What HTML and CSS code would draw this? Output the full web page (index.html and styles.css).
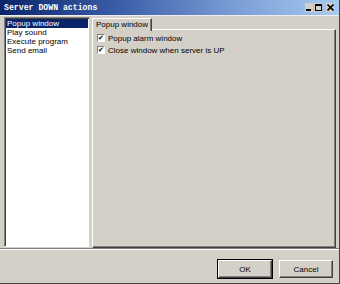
FILE: index.html
```html
<!DOCTYPE html>
<html>
<head>
<meta charset="utf-8">
<link rel="stylesheet" href="styles.css">
</head>
<body>
<div class="window">
  <div class="titlebar">
    <span class="title">Server DOWN actions</span>
    <div class="tbtns">
      <span class="tb tb-min"><svg width="6" height="7" viewBox="0 0 6 7"><rect x="0" y="5" width="5" height="2" fill="#000"/></svg></span>
      <span class="tb tb-max"><svg width="7" height="7" viewBox="0 0 7 7"><rect x="0.5" y="0.5" width="6" height="6" fill="none" stroke="#000"/><rect x="0" y="0" width="7" height="2" fill="#000"/></svg></span>
      <span class="tb tb-close"><svg width="7" height="7" viewBox="0 0 7 7"><path d="M0.5 0.5L6.5 6.5M6.5 0.5L0.5 6.5" stroke="#000" stroke-width="1.6"/></svg></span>
    </div>
  </div>
  <div class="main">
    <ul class="list">
      <li class="sel">Popup window</li>
      <li>Play sound</li>
      <li>Execute program</li>
      <li>Send email</li>
    </ul>
    <div class="tabs">
      <div class="tabrow"><span class="tab">Popup window</span></div>
      <div class="panel">
        <label class="chk"><span class="box">✔</span>Popup alarm window</label>
        <label class="chk"><span class="box">✔</span>Close window when server is UP</label>
      </div>
    </div>
  </div>
  <div class="footer">
    <button class="btn">OK</button>
    <button class="btn">Cancel</button>
  </div>
</div>
</body>
</html>
```
FILE: styles.css
```css
* { box-sizing: border-box; }
html, body { margin: 0; padding: 0; }
body {
  width: 340px; height: 284px; overflow: hidden;
  font-family: "Liberation Sans", Arial, sans-serif;
  font-size: 8px;
  background: #d4d0c8;
}
.window {
  width: 340px; height: 284px;
  display: flex; flex-direction: column;
  background: #d4d0c8;
  border-right: 1px solid #404040;
  border-bottom: 1px solid #404040;
}
.titlebar {
  height: 16px;
  display: flex; align-items: center; justify-content: space-between;
  padding: 0 5px 0 4px;
  background: linear-gradient(to right, #0a246a 0%, #3a5ea8 35%, #7b9fd6 70%, #a6caf0 100%);
  border-bottom: 1px solid #eee;
}
.title {
  color: #fff; font-family: "Liberation Mono", monospace; font-weight: bold; font-size: 8.2px;
}
.tbtns { display: flex; gap: 1px; align-items: center; }
.tb {
  width: 8px; height: 9px; display: flex; align-items: center; justify-content: center;
  background: #d4d0c8;
}
.tb-close { margin-left: 3px; }
.main {
  flex: 1;
  display: flex; gap: 2px;
  padding: 1px 3px 0 4px;
  min-height: 0;
}
.list {
  margin: 0; padding: 1px; list-style: none;
  width: 86px;
  background: #fff;
  border-top: 1px solid #808080; border-left: 1px solid #808080;
  border-right: 1px solid #d4d0c8; border-bottom: 1px solid #fff;
  box-shadow: inset 1px 1px 0 #404040;
  height: 230px;
}
.list li { height: 9px; line-height: 9px; padding-left: 1px; color: #000; white-space: nowrap; }
.list li.sel { background: #0a246a; color: #fff; }
.tabs { flex: 1; display: flex; flex-direction: column; height: 231px; }
.tabrow { height: 12px; display: flex; padding-left: 0; }
.tab {
  height: 13px; line-height: 11px; padding: 0 3px;
  border-top: 1px solid #fff; border-left: 1px solid #fff;
  border-right: 1px solid #404040;
  box-shadow: inset -1px 0 0 #808080;
  background: #d4d0c8; position: relative; z-index: 1; margin-top: 1px;
}
.panel {
  flex: 1;
  border-top: 1px solid #fff; border-left: 1px solid #fff;
  border-right: 1px solid #404040; border-bottom: 1px solid #404040;
  box-shadow: inset -1px -1px 0 #808080;
  padding: 3px 4px;
  display: flex; flex-direction: column; gap: 2px;
}
.chk { display: flex; align-items: center; gap: 3px; height: 10px; }
.box {
  width: 8px; height: 8px; background: #fff;
  border-top: 1px solid #808080; border-left: 1px solid #808080;
  border-right: 1px solid #fff; border-bottom: 1px solid #fff;
  font-size: 7px; line-height: 6px; text-align: center; color: #000; overflow: hidden;
}
.footer {
  height: 35px;
  display: flex; justify-content: flex-end; align-items: flex-start; gap: 7px;
  padding: 11px 6px 0 0;
  border-top: 1px solid #808080;
  box-shadow: inset 0 1px 0 #fff;
  margin-top: 1px;
}
.btn {
  width: 54px; height: 18px;
  font-family: "Liberation Sans", Arial, sans-serif; font-size: 8px;
  background: #d4d0c8; color: #000;
  border-top: 1px solid #fff; border-left: 1px solid #fff;
  border-right: 1px solid #404040; border-bottom: 1px solid #404040;
  box-shadow: inset -1px -1px 0 #808080;
  padding: 0;
}
.btn:first-child { outline: 1px solid #000; }
```
